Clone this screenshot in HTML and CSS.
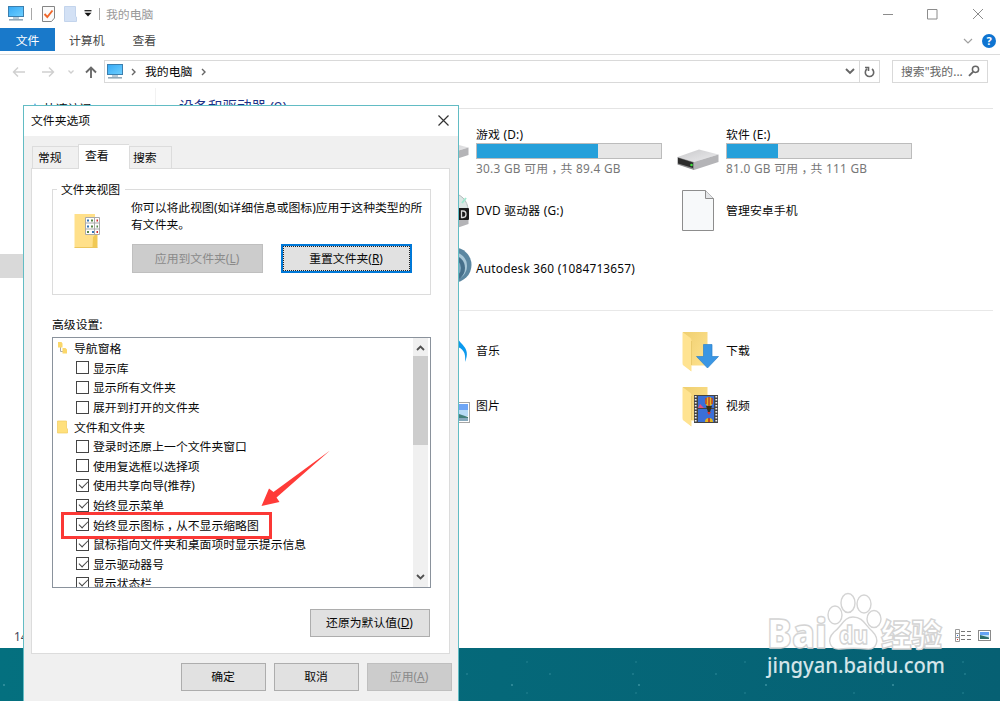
FILE: index.html
```
<!DOCTYPE html>
<html lang="zh-CN">
<head>
    <meta charset="UTF-8">
    <meta name="viewport" content="width=device-width, initial-scale=1.0">
    <title>我的电脑</title>
    <link rel="stylesheet" href="styles.css">
</head>
<body>
    <!-- Shared icons -->
    <svg class="defs" width="0" height="0">
        <defs>
            <linearGradient id="screen" x1="0" y1="0" x2="1" y2="1">
                <stop offset="0" stop-color="#36a9f5"/>
                <stop offset="1" stop-color="#6fd0ff"/>
            </linearGradient>
            <linearGradient id="folderBack" x1="0" y1="0" x2="1" y2="1">
                <stop offset="0" stop-color="#efcf70"/>
                <stop offset="1" stop-color="#ffe391"/>
            </linearGradient>
            <linearGradient id="driveTop" x1="0" y1="0" x2="1" y2="1">
                <stop offset="0" stop-color="#c9c9cb"/>
                <stop offset="1" stop-color="#ececee"/>
            </linearGradient>
            <symbol id="monitor" viewBox="0 0 16 15">
                <rect x="0.5" y="0.5" width="15" height="10" fill="url(#screen)" stroke="#3c7fae"/>
                <path d="M5 11h6v2H5z" fill="#b9cad6"/>
                <path d="M1 13h14v1.6H1z" fill="#93a9b8"/>
            </symbol>
            <symbol id="drive" viewBox="0 0 42 22">
                <path d="M0.5 8L22 0.5L41.5 5.5L17 13z" fill="url(#driveTop)"/>
                <path d="M17 13L41.500 5.500V13L17 21z" fill="#b4b4b7"/>
                <path d="M0.500 8L17 13V21L0.500 15.500z" fill="#8b8b8d"/>
                <path d="M1 8.800L16 13.500V19L1 14.500z" fill="#2c2c2c"/>
                <circle cx="14.500" cy="16" r="1.300" fill="#3ee03e"/>
            </symbol>
            <symbol id="folder" viewBox="0 0 38 41">
                <path d="M1 1H25.500V34.500H9V40L1 33z" fill="url(#folderBack)"/>
                <path d="M0.500 1L8.500 7Q9.500 8 9.500 10V40.500L1.500 34.500Q0.500 34 0.500 32z" fill="#ffe391"/>
                <path d="M9.500 10V34" stroke="#e6c566" stroke-width="0.8"/>
            </symbol>
        </defs>
    </svg>

    <!-- Explorer window -->
    <div class="explorer">
        <div class="titlebar">
            <svg class="app-icon" width="16" height="15"><use href="#monitor"/></svg>
            <span class="sep"></span>
            <svg class="doc-check" width="13" height="16" viewBox="0 0 13 16">
                <path d="M0.500 0.500H12.500V12L9.500 15.500H0.500z" fill="#fbfbfb" stroke="#858585"/>
                <path d="M2.500 8L5.300 11L10.500 4.500" fill="none" stroke="#f0672b" stroke-width="1.900"/>
            </svg>
            <svg class="doc-blue" width="13" height="16" viewBox="0 0 13 16">
                <path d="M0.500 0.500H11.500V10.500L12.500 11V15.500H0.500z" fill="#d3e1f5" stroke="#c3d4ec"/>
            </svg>
            <svg class="caret" width="8" height="7" viewBox="0 0 8 7">
                <path d="M0.500 0.700H7.500" stroke="#222" stroke-width="1.300"/>
                <path d="M0.500 2.800H7.500L4 6.500z" fill="#111"/>
            </svg>
            <span class="sep"></span>
            <span class="window-title">我的电脑</span>
            <svg class="window-buttons" width="102" height="12" viewBox="0 0 102 12">
                <path d="M0 6.500H10M44.500 1.500H54V11H44.500zM90 1L100 11M100 1L90 11" fill="none" stroke="#8c8c8c"/>
            </svg>
        </div>

        <div class="menu">
            <span class="menu-item active">文件</span>
            <span class="menu-item computer">计算机</span>
            <span class="menu-item">查看</span>
            <svg class="menu-chevron" width="10" height="6" viewBox="0 0 10 6">
                <path d="M1 1L5 5L9 1" fill="none" stroke="#a0a0a0" stroke-width="1.200"/>
            </svg>
            <span class="help">?</span>
        </div>

        <div class="navbar">
            <svg class="nav-arrows" width="86" height="14" viewBox="0 0 86 14">
                <path d="M13 7H1.500M6 2.500L1.500 7L6 11.500M30 7H41.500M37 2.500L41.500 7L37 11.500" fill="none" stroke="#cfcfcf" stroke-width="1.400"/>
                <path d="M56.500 5.500L59 8L61.500 5.500" fill="none" stroke="#cfcfcf" stroke-width="1.300"/>
                <path d="M79 13V2.500M74 7.500L79 2.500L84 7.500" fill="none" stroke="#6a6a6a" stroke-width="1.900"/>
            </svg>
            <div class="address">
                <svg width="16" height="15"><use href="#monitor"/></svg>
                <svg class="crumb" width="5" height="8" viewBox="0 0 5 8"><path d="M1 1L4 4L1 7" fill="none" stroke="#666" stroke-width="1.400"/></svg>
                <span class="path">我的电脑</span>
                <svg class="crumb" width="5" height="8" viewBox="0 0 5 8"><path d="M1 1L4 4L1 7" fill="none" stroke="#666" stroke-width="1.400"/></svg>
                <svg class="drop" width="10" height="7" viewBox="0 0 10 7"><path d="M1 1L5 5L9 1" fill="none" stroke="#666" stroke-width="1.900"/></svg>
                <span class="refresh">
                    <svg width="11" height="12" viewBox="0 0 11 12">
                        <path d="M8 3A4.200 4.200 0 1 1 3 3M1 1.500H4.500V5" fill="none" stroke="#666" stroke-width="1.600"/>
                    </svg>
                </span>
            </div>
            <div class="search">
                <span>搜索"我的...</span>
                <svg width="12" height="12" viewBox="0 0 12 12">
                    <circle cx="7.500" cy="4.300" r="3.100" fill="none" stroke="#666" stroke-width="1.500"/>
                    <path d="M5 6.800L1 10.800" stroke="#666" stroke-width="1.900"/>
                </svg>
            </div>
        </div>

        <div class="content">
            <div class="sidebar">
                <div class="quick">
                    <svg width="10" height="10" viewBox="0 0 10 10"><path d="M5 0L6.500 3.500L10 4L7 6.500L8 10L5 8L2 10L3 6.500L0 4L3.500 3.500z" fill="#3b9be0"/></svg>
                    快速访问
                </div>
                <div class="selected"></div>
            </div>
            <div class="main">
                <div class="section-title"><span>设备和驱动器 (9)</span></div>
                <div class="tiles devices">
                    <div class="tile second">
                        <svg class="icon" width="48" height="48" viewBox="0 0 48 48"><use href="#drive" x="0" y="14" width="42" height="22"/></svg>
                        <div class="info usage">
                            <div>游戏 (D:)</div>
                            <div class="bar"><div class="fill" style="width: 66%"></div></div>
                            <div class="free">30.3 GB 可用<span class="comma">，</span>共 89.4 GB</div>
                        </div>
                    </div>
                    <div class="tile">
                        <svg class="icon" width="48" height="48" viewBox="0 0 48 48"><use href="#drive" x="0" y="21" width="42" height="22"/></svg>
                        <div class="info usage">
                            <div>软件 (E:)</div>
                            <div class="bar"><div class="fill" style="width: 27.5%"></div></div>
                            <div class="free">81.0 GB 可用<span class="comma">，</span>共 111 GB</div>
                        </div>
                    </div>
                    <div class="tile second">
                        <svg class="icon" width="48" height="48" viewBox="0 0 48 48">
                            <circle cx="24" cy="24" r="17" fill="#dce6e4" stroke="#b5bcbc"/>
                            <path d="M35 17L39 12" stroke="#9fe8cf" stroke-width="2"/>
                            <path d="M14 34L41.500 34V38L24 44z" fill="#b4b4b7"/>
                            <rect x="14" y="22" width="28" height="12" rx="1" fill="#1b1b1b"/>
                            <path d="M34.500 25V31.500H36Q39 31.500 39 28.300Q39 25 36 25z" fill="none" stroke="#ddd" stroke-width="1.300"/>
                        </svg>
                        <div class="info">DVD 驱动器 (G:)</div>
                    </div>
                    <div class="tile">
                        <svg class="icon" width="48" height="48" viewBox="0 0 48 48">
                            <path d="M5.500 4.500H28.500L36.500 12.500V44.500H5.500z" fill="#f7f9fa" stroke="#8d8d8d"/>
                            <path d="M28.500 4.500V12.500H36.500" fill="#e4e6e8" stroke="#8d8d8d"/>
                        </svg>
                        <div class="info">管理安卓手机</div>
                    </div>
                    <div class="tile second">
                        <svg class="icon" width="48" height="48" viewBox="0 0 48 48">
                            <circle cx="27" cy="21" r="17.500" fill="#5b87a1"/>
                            <circle cx="26" cy="22" r="14" fill="#a9c8d8"/>
                            <circle cx="25" cy="24" r="13" fill="#47708b"/>
                            <circle cx="24" cy="24" r="10" fill="#7fa9c0"/>
                        </svg>
                        <div class="info">Autodesk 360 (1084713657)</div>
                    </div>
                </div>
                <div class="divider"></div>
                <div class="tiles folders">
                    <div class="tile second">
                        <svg class="icon" width="48" height="48" viewBox="0 0 48 48">
                            <path d="M29 8C31 19 45 20 38 36C39 26 36 23 29 20z" fill="#0b99ee"/>
                        </svg>
                        <div class="info">音乐</div>
                    </div>
                    <div class="tile">
                        <svg class="icon" width="48" height="48" viewBox="0 0 48 48">
                            <use href="#folder" x="5" y="5" width="38" height="41"/>
                            <path d="M26.500 18.500H35V30.500H41.500L30.500 42L19.500 30.500H26.500z" fill="#3a96e4" stroke="#2c82cc" stroke-width="0.700"/>
                        </svg>
                        <div class="info">下载</div>
                    </div>
                    <div class="tile second">
                        <svg class="icon" width="48" height="48" viewBox="0 0 48 48">
                            <rect x="16.500" y="21.500" width="26" height="20" fill="#fff" stroke="#a5a5a5"/>
                            <path d="M18 23H41V31H18z" fill="#6ea5f5"/>
                            <path d="M18 29H41V35H18z" fill="#b9dcf7"/>
                            <path d="M18 36L32 33L41 36V40H18z" fill="#437f7b"/>
                            <path d="M18 37H41V40H18z" fill="#86a9bd"/>
                        </svg>
                        <div class="info">图片</div>
                    </div>
                    <div class="tile">
                        <svg class="icon" width="48" height="48" viewBox="0 0 48 48">
                            <use href="#folder" x="5" y="5" width="38" height="41"/>
                            <g transform="translate(0 -1)">
                                <rect x="17" y="15" width="24" height="28" fill="#444"/>
                                <path d="M18.700 16V43M39.300 16V43" stroke="#eee" stroke-width="1.800" stroke-dasharray="1.600 1.400"/>
                                <path d="M21 16H37V28H21zM21 29H37V42H21z" fill="#3a6fd8"/>
                                <path d="M21 28L23 24L27 28z" fill="#e4507e"/>
                                <ellipse cx="32" cy="21.500" rx="4" ry="4.500" fill="#e2b51f"/>
                                <path d="M29 18V24M32 17V26M35 18V24" stroke="#b3262c" stroke-width="1.200"/>
                                <path d="M29 26H35L33 32H31z" fill="#3c3112"/>
                                <path d="M30 32L34 32L32 35z" fill="#dc342d"/>
                                <path d="M28 42Q28 38 32 38Q36 38 36 42z" fill="#e2b51f"/>
                                <path d="M32 38V42" stroke="#b3262c" stroke-width="1.500"/>
                            </g>
                        </svg>
                        <div class="info">视频</div>
                    </div>
                </div>
            </div>
        </div>

        <div class="status">
            <span>14 个项目</span>
            <svg width="37" height="13" viewBox="0 0 37 13">
                <path d="M0.500 0.500H4.500V12.500H0.500zM0.500 4.500H4.500M0.500 8.500H4.500" fill="none" stroke="#9a9a9a"/>
                <path d="M2 6.500H3" stroke="#2a6bd0"/>
                <path d="M2 10.500H3" stroke="#d02a2a"/>
                <path d="M6 2.500H10M12 2.500H16M6 6.500H10M12 6.500H16M6 10.500H10M12 10.500H16" stroke="#777"/>
                <rect x="23.500" y="1.500" width="12" height="10" fill="#fff" stroke="#8a8a8a"/>
                <path d="M25 3H34V6H25z" fill="#65a2f4"/>
                <path d="M25 6H34V8H25z" fill="#c0e2f5"/>
                <path d="M25 6L34 8.500V10H25z" fill="#2f6e6b"/>
            </svg>
        </div>
    </div>

    <!-- Folder options dialog -->
    <div class="dialog">
        <div class="dialog-title">
            <span>文件夹选项</span>
            <svg width="11" height="11" viewBox="0 0 11 11"><path d="M0.500 0.500L10.500 10.500M10.500 0.500L0.500 10.500" stroke="#333" stroke-width="1.200"/></svg>
        </div>

        <div class="tabs">
            <span class="tab">常规</span>
            <span class="tab current">查看</span>
            <span class="tab last">搜索</span>
        </div>

        <div class="panel">
            <div class="group">
                <span class="legend">文件夹视图</span>
                <div class="group-body">
                    <svg class="view-icon" width="27" height="36" viewBox="0 0 27 36">
                        <path d="M0.500 1H21V34.500H0.500z" fill="#ffe08a"/>
                        <path d="M19 24L21 22H23.500V34.500H18.500z" fill="#f1c955"/>
                        <path d="M0.500 34.500H23.500" stroke="#ecc65e"/>
                        <path d="M11.500 4.500H25.500V21.500H11.500zM20.500 4.500V21.500M11.500 10H25.500M11.500 16H25.500" fill="#fff" stroke="#a9a9a9"/>
                        <path d="M13 7.500H15M13 13.500H15M18 19H20" stroke="#3575b5" stroke-width="2"/>
                        <path d="M17 7.500H19M17 13.500H19M22.500 13.500H24M13 19H15" stroke="#568746" stroke-width="2"/>
                        <path d="M22.500 7.500H24M22.500 19H24" stroke="#d42a2a" stroke-width="2"/>
                    </svg>
                    <div class="group-text">
                        <p>你可以将此视图(如详细信息或图标)应用于这种类型的所有文件夹。</p>
                        <div class="group-buttons">
                            <button disabled>应用到文件夹(<u>L</u>)</button>
                            <button class="focused">重置文件夹(<u>R</u>)</button>
                        </div>
                    </div>
                </div>
            </div>

            <div class="list-label">高级设置:</div>
            <div class="list">
                <div class="rows">
                    <div class="row head">
                        <svg width="11" height="14" viewBox="0 0 11 14">
                            <path d="M3.500 6V10.500H6" fill="none" stroke="#aaa"/>
                            <path d="M1 1H4.500L5.500 2.500V6.500H1zM5.500 7H8.500L10 8.500V12.500H5.500z" fill="#fbd769"/>
                        </svg>
                        导航窗格
                    </div>
                    <div class="row"><i class="check"></i>显示库</div>
                    <div class="row"><i class="check"></i>显示所有文件夹</div>
                    <div class="row"><i class="check"></i>展开到打开的文件夹</div>
                    <div class="row head">
                        <svg width="11" height="14" viewBox="0 0 11 14">
                            <path d="M0.500 1H9.500V8L10.500 9V13H0.500z" fill="#ffe07c" stroke="#f1cc60" stroke-width="0.700"/>
                        </svg>
                        文件和文件夹
                    </div>
                    <div class="row"><i class="check"></i>登录时还原上一个文件夹窗口</div>
                    <div class="row"><i class="check"></i>使用复选框以选择项</div>
                    <div class="row"><i class="check on"></i>使用共享向导(推荐)</div>
                    <div class="row"><i class="check on"></i>始终显示菜单</div>
                    <div class="row"><i class="check on"></i><span>始终显示图标<span class="comma">，</span>从不显示缩略图</span></div>
                    <div class="row"><i class="check on"></i>鼠标指向文件夹和桌面项时显示提示信息</div>
                    <div class="row"><i class="check on"></i>显示驱动器号</div>
                    <div class="row"><i class="check on"></i>显示状态栏</div>
                </div>
                <div class="scrollbar">
                    <svg width="9" height="6" viewBox="0 0 9 6"><path d="M1 5L4.500 1.500L8 5" fill="none" stroke="#505050" stroke-width="1.800"/></svg>
                    <div class="thumb"></div>
                    <svg class="down" width="9" height="6" viewBox="0 0 9 6"><path d="M1 1L4.500 4.500L8 1" fill="none" stroke="#505050" stroke-width="1.800"/></svg>
                </div>
            </div>
            <button class="restore">还原为默认值(<u>D</u>)</button>
        </div>

        <div class="dialog-footer">
            <button>确定</button>
            <button>取消</button>
            <button disabled>应用(<u>A</u>)</button>
        </div>
    </div>

    <!-- Red marks over the dialog -->
    <div class="mark-box"></div>
    <svg class="mark-arrow" width="70" height="58" viewBox="0 0 70 58">
        <path d="M69 0.500L12.500 42L8 38.500L0.500 56L18.500 52L15.500 47.500z" fill="#ff3b38"/>
    </svg>

    <!-- Watermark -->
    <svg class="watermark" width="190" height="92" viewBox="0 0 190 92">
        <g class="outline">
            <text x="7" y="58" class="bai" textLength="60" lengthAdjust="spacingAndGlyphs">Bai</text>
            <ellipse cx="75" cy="25" rx="7" ry="9"/>
            <ellipse cx="88" cy="13" rx="7" ry="9.500"/>
            <ellipse cx="104" cy="14" rx="7" ry="9"/>
            <ellipse cx="114" cy="29" rx="7" ry="8.500"/>
            <path d="M93 27C103 27 105 35 112 41C121 50 116 60 107 59C98 58 89 58 80 59C70 60 66 50 74 42C82 36 84 27 93 27z"/>
            <text x="79" y="54" class="du" textLength="29" lengthAdjust="spacingAndGlyphs">du</text>
            <text x="121" y="56" class="jingyan" textLength="61" lengthAdjust="spacingAndGlyphs">经验</text>
        </g>
        <text x="7" y="83" class="url" textLength="178" lengthAdjust="spacingAndGlyphs">jingyan.baidu.com</text>
    </svg>
</body>
</html>
```

FILE: styles.css
```
/* Universal styling */
* {
    box-sizing: border-box;
    margin: 0;
    padding: 0;
}

/* Desktop */
body {
    position: relative;
    width: 1000px;
    height: 701px;
    overflow: hidden;
    font-family: "Noto Sans", "Noto Sans CJK SC", sans-serif;
    font-size: 11.85px;
    line-height: 18px;
    color: #080808;
    white-space: nowrap;
    background-color: #056678;
    background-image:
        radial-gradient(circle at 4px 27px, #4fa3b0 0, transparent 1.5px),
        radial-gradient(circle at 52px 38px, #2b8797 0, transparent 1.5px),
        radial-gradient(circle at 91px 11px, #22808f 0, transparent 1.5px),
        linear-gradient(90deg, #04707f, #066073);
    background-size: 127px 47px, 83px 53px, 109px 31px, 100% 100%;
}

.defs {
    position: absolute;
}

svg {
    display: block;
    flex: none;
}

/* Explorer window */
.explorer {
    display: flex;
    flex-direction: column;
    height: 648px;
    background: #fff;
}

.titlebar {
    display: flex;
    align-items: center;
    height: 28px;
    padding: 0 15px 1px 8px;
}

.sep {
    width: 1px;
    height: 12px;
    margin: 0 6px 0 7px;
    background: #a8a8a8;
}

.doc-check {
    margin-left: 4px;
}

.doc-blue {
    margin: 0 7px 0 9px;
}

.window-title {
    color: #999;
}

.window-buttons {
    margin-left: auto;
}

/* Ribbon tabs */
.menu {
    display: flex;
    align-items: center;
    height: 27px;
    padding: 0 4px 3px 0;
    border-bottom: 1px solid #dcdcdc;
    color: #444;
}

.menu-item.active {
    width: 55px;
    height: 23px;
    line-height: 24px;
    text-align: center;
    color: #fff;
    background: #1979ca;
}

.menu-item.computer {
    margin: 0 28px 0 14px;
}

.menu-chevron {
    margin: 2px 9px 0 auto;
}

.help {
    width: 14px;
    height: 14px;
    margin-top: 2px;
    border-radius: 50%;
    background: #0f74d1;
    color: #fff;
    font-size: 11px;
    font-weight: bold;
    line-height: 14px;
    text-align: center;
}

/* Navigation row */
.navbar {
    display: flex;
    align-items: center;
    height: 33px;
    padding: 0 12px;
}

.address {
    display: flex;
    align-items: center;
    width: 776px;
    height: 23px;
    margin: 0 12px 0 6px;
    padding-left: 2px;
    border: 1px solid #d9d9d9;
}

.crumb {
    margin: 0 9px 0 8px;
}

.path {
    margin: 0 1px 2px 0;
}

.drop {
    margin: 0 4px 0 auto;
}

.refresh {
    display: flex;
    align-items: center;
    justify-content: center;
    width: 20px;
    height: 100%;
    border-left: 1px solid #d9d9d9;
}

.search {
    display: flex;
    align-items: center;
    justify-content: space-between;
    width: 96px;
    height: 23px;
    padding: 0 7px 1px 8px;
    border: 1px solid #d9d9d9;
    color: #666;
}

/* Content */
.content {
    display: flex;
    flex: 1;
}

.sidebar {
    width: 156px;
    padding-top: 11px;
    border-right: 1px solid #f2f2f2;
}

.quick {
    display: flex;
    align-items: center;
    gap: 4px;
    padding-left: 30px;
}

.selected {
    height: 24px;
    margin-top: 137px;
    background: #d9d9d9;
}

.main {
    flex: 1;
    padding: 6px 7px 0 21px;
}

.section-title {
    display: flex;
    align-items: center;
    gap: 8px;
    height: 29px;
    padding: 0 0 5px 2px;
    font-size: 14.5px;
    color: #1e3287;
}

.section-title::after {
    content: "";
    flex: 1;
    height: 1px;
    margin-top: 5px;
    background: #e4e4e4;
}

.tiles {
    display: grid;
    grid-template-columns: 250px 250px 250px;
    letter-spacing: 0.1px;
}

.devices {
    grid-auto-rows: 58px;
}

.folders {
    grid-auto-rows: 55px;
}

.tile {
    display: flex;
    align-items: center;
    gap: 1px;
}

.tile.second {
    grid-column: 2;
    letter-spacing: 0.22px;
}

.usage {
    padding-bottom: 3px;
}

.divider {
    height: 1px;
    margin: 13px 0 11px;
    background: #e8e8e8;
}

.bar {
    width: 186px;
    height: 16px;
    border: 1px solid #bcbcbc;
    background: #e6e6e6;
}

.fill {
    height: 100%;
    background: #26a0da;
}

.free {
    color: #777;
    letter-spacing: 0.27px;
}

.comma {
    position: relative;
    left: 3px;
}

.status {
    display: flex;
    align-items: center;
    justify-content: space-between;
    height: 24px;
    padding: 0 8px 1px 14px;
    color: #445;
}

/* Dialog window */
.dialog {
    position: absolute;
    left: 23px;
    top: 105px;
    width: 436px;
    height: 600px;
    border: 1px solid #62bcc4;
    background: #f0f0f0;
}

.dialog-title {
    display: flex;
    align-items: center;
    justify-content: space-between;
    height: 30px;
    padding: 0 9px 2px 7px;
    background: #fff;
}

.tabs {
    position: relative;
    display: flex;
    align-items: flex-end;
    height: 25px;
    margin: 8px 0 -1px 8px;
}

.tab {
    width: 46px;
    height: 23px;
    padding: 1px 0 0 5px;
    border: 1px solid #dcdcdc;
    border-right: 0;
}

.tab.current {
    width: 51px;
    height: 25px;
    padding-left: 6px;
    border-bottom: 0;
    background: #fff;
}

.tab.last {
    width: 43px;
    padding-left: 3px;
    border-left: 1px solid #dcdcdc;
    border-right: 1px solid #dcdcdc;
}

.panel {
    width: 419px;
    height: 486px;
    margin-left: 7px;
    padding: 20px 18px 0 20px;
    border: 1px solid #dcdcdc;
    background: #fff;
}

.group {
    height: 106px;
    border: 1px solid #dcdcdc;
}

.legend {
    display: block;
    width: 68px;
    margin: -10px 0 0 4px;
    padding-left: 4px;
    background: #fff;
}

.group-body {
    display: flex;
    padding: 1px 0 0 21px;
}

.view-icon {
    margin: 14px 30px 0 0;
}

.group-text p {
    width: 296px;
    line-height: 17px;
    white-space: normal;
}

.group-buttons {
    display: flex;
    gap: 18px;
    margin: 11px 0 0 1px;
}

/* Buttons */
button {
    height: 29px;
    padding: 0 1px 2px 0;
    border: 1px solid #adadad;
    background: #e1e1e1;
    color: #080808;
    font: inherit;
}

button:disabled {
    border-color: #bfbfbf;
    background: #ccc;
    color: #8a8a8a;
}

.group-buttons button {
    width: 131px;
}

button.focused {
    border: 2px solid #0078d7;
    outline: 1px dotted #222;
    outline-offset: -3px;
}

.list-label {
    margin-top: 20px;
}

/* Advanced settings list */
.list {
    display: flex;
    height: 251px;
    margin-top: 4px;
    padding-right: 2px;
    border: 1px solid #8a929c;
    overflow: hidden;
}

.rows {
    flex: 1;
    padding-top: 0.5px;
}

.row {
    display: flex;
    align-items: center;
    gap: 4px;
    height: 19.6px;
    padding-left: 23px;
}

.row.head {
    gap: 6px;
    padding-left: 4px;
}

.check {
    position: relative;
    width: 13px;
    height: 13px;
    border: 1px solid #444;
}

.check.on::after {
    content: "";
    position: absolute;
    left: 1.5px;
    top: 1.5px;
    width: 8px;
    height: 4px;
    border: solid #444;
    border-width: 0 0 1px 1px;
    transform: rotate(-45deg);
}

.scrollbar {
    display: flex;
    flex-direction: column;
    align-items: center;
    width: 15px;
    padding: 7px 0;
    background: #f0f0f0;
}

.thumb {
    width: 15px;
    height: 89px;
    margin-top: 5px;
    background: #cdcdcd;
}

.down {
    margin-top: auto;
}

.restore {
    display: block;
    width: 120px;
    height: 28px;
    margin: 21px 1px 0 auto;
}

.dialog-footer {
    display: flex;
    justify-content: flex-end;
    gap: 8px;
    margin-top: 9px;
    padding-right: 6px;
}

.dialog-footer button {
    width: 85px;
    height: 28px;
}

/* Red marks */
.mark-box {
    position: absolute;
    left: 61px;
    top: 512px;
    width: 211px;
    height: 27px;
    border: 3px solid #fb3835;
}

.mark-arrow {
    position: absolute;
    left: 261px;
    top: 450px;
}

/* Watermark */
.watermark {
    position: absolute;
    left: 760px;
    top: 590px;
}

.outline {
    fill: #fff;
    stroke: #d4d4d4;
    stroke-width: 1.4px;
}

.bai {
    font: 800 40px "Open Sans", sans-serif;
}

.du {
    font: 800 24px "Open Sans", sans-serif;
}

.jingyan {
    font: 900 31px "Noto Sans CJK SC", sans-serif;
}

.url {
    font: 500 21px "Noto Sans", sans-serif;
    fill: #d3e5e9;
}
```
